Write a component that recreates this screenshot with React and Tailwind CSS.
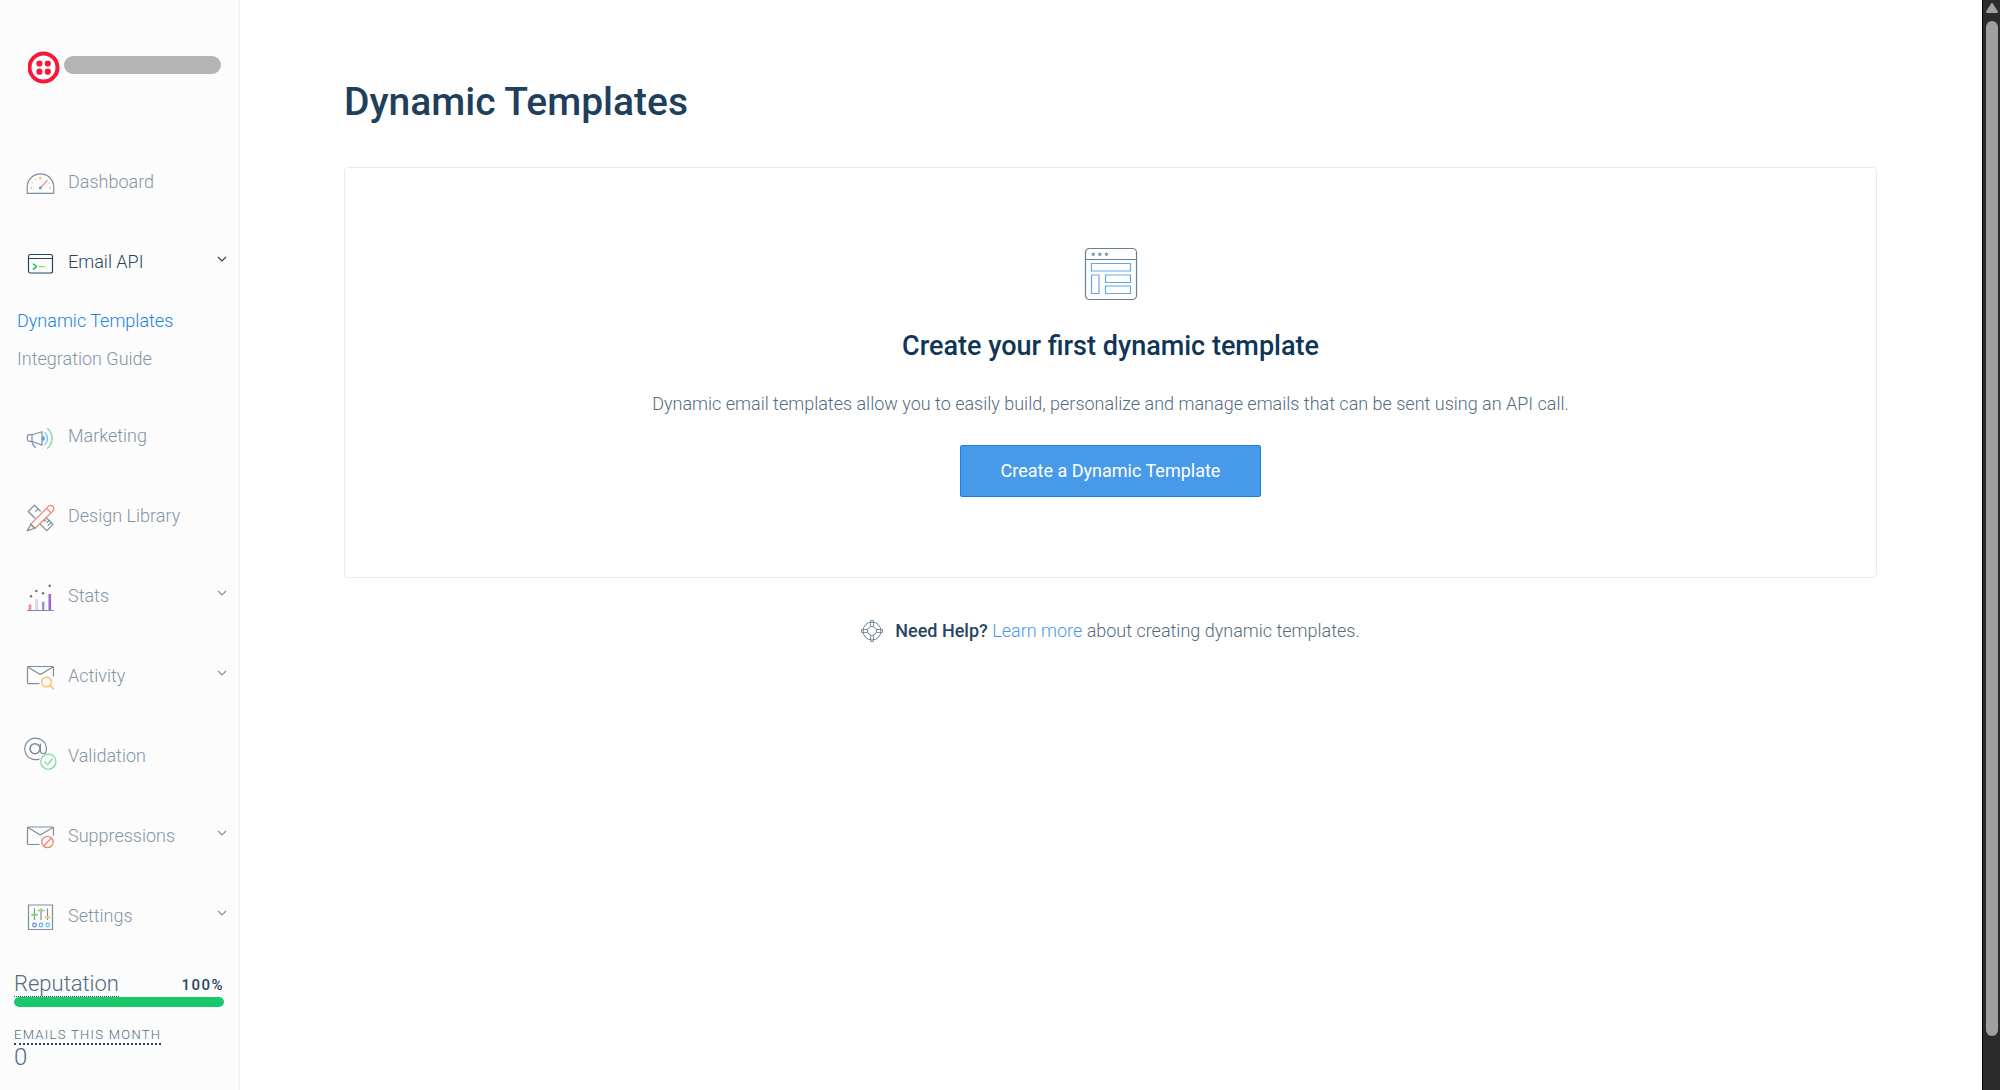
import { useState } from "react";
import clsx from "clsx";

const SLATE = "#7c8da0";

function Icon({ children, stroke = SLATE }) {
  return (
    <svg
      width="32"
      height="40"
      viewBox="0 0 32 40"
      fill="none"
      stroke={stroke}
      strokeWidth="1.2"
      strokeLinecap="round"
      strokeLinejoin="round"
      className="shrink-0 overflow-visible"
      aria-hidden="true"
    >
      {children}
    </svg>
  );
}

const icons = {
  dashboard: (
    <Icon>
      <path d="M3.2 31.3V25.2a13.2 13.2 0 0 1 26.6 0v6.100z" strokeLinejoin="miter" />
      <g fill="#f9bf62" stroke="none">
        <circle cx="16.4" cy="16.2" r="1.2" />
        <circle cx="11.6" cy="17.6" r=".7" />
        <circle cx="8.2" cy="21" r=".7" />
        <circle cx="7.2" cy="26" r=".9" />
        <circle cx="25" cy="21.2" r=".7" />
        <circle cx="26" cy="26" r=".9" />
      </g>
      <path d="M17 25.2L23.2 18.6" stroke="#f2836f" />
      <circle cx="16.3" cy="25.9" r="1.4" fill="#479ae9" stroke="none" />
    </Icon>
  ),
  email: (
    <Icon stroke="#294661">
      <rect x="4.5" y="12.5" width="24" height="18.5" rx="2" />
      <path d="M4.5 16.5h24" />
      <path d="M9.5 22l3 2.6-3 2.6" stroke="#18c96b" strokeWidth="1.6" />
      <path d="M15.6 24.6h4.8" stroke="#8fd96b" strokeWidth="1.4" />
    </Icon>
  ),
  marketing: (
    <Icon>
      <path d="M8 18.7L18 15.7v13.6L8 25.3H5.2a2 2 0 0 1-1.8-2v-2.6a2 2 0 0 1 1.8-2zM8 18.7v6.6" />
      <path d="M8.2 26.4c.4 2.4 1.4 4.2 3.2 5.2" stroke="#6f8fd8" />
      <path d="M19 20.6a2 2 0 0 1 0 3.6z" fill="#479ae9" stroke="#479ae9" />
      <path d="M20.8 16.6a8 8 0 0 1 0 12" stroke="#5cc3ec" />
      <path d="M23.6 12.4c6 5.6 6 14.2 0 19.8" stroke="#7fdca4" strokeWidth="1.4" />
    </Icon>
  ),
  design: (
    <Icon>
      <path d="M11 22.2L4.2 15.5 10.5 9.2l5.8 5.8M22.5 22l6.5 6.4-6.2 6.2-6.6-6.5" />
      <path d="M14 12.8l-2.4 2.4M25 24.5l-2 2M27 26.5l-2.8 2.8M21.5 24l-1 1" />
      <path
        d="M6.8 28.2L23 11.8l1.3-1.5a3.3 3.3 0 0 1 4.6 4.7l-1.3 1.3-16.6 15.9zM22.5 12.3l4.6 4.6"
        stroke="#f2836f"
      />
      <path d="M6.8 28.2L3.4 34.6l7.6-2.4M6.8 28.2l1.7 2 2.5 2" />
    </Icon>
  ),
  stats: (
    <Icon>
      <g stroke="none">
        <path d="M4.7 28.5h2.6V34H4.7z" fill="#f98a94" />
        <path d="M11.2 23h2.8v11h-2.8z" fill="#edcdf2" />
        <path d="M18 25.7h2.4V34H18z" fill="#8f8df0" />
        <path d="M24.5 18h2.6v16h-2.6z" fill="#a265c8" />
        <g fill="#5f7489">
          <circle cx="7" cy="20.3" r="1.2" />
          <circle cx="12.3" cy="15" r="1.2" />
          <circle cx="19" cy="17.3" r="1.2" />
          <circle cx="25.7" cy="9.7" r="1.2" />
        </g>
      </g>
      <path d="M3.5 34.5h26" />
    </Icon>
  ),
  activity: (
    <Icon>
      <path d="M15 27.6H4.5a1 1 0 0 1-1-1V11.5a1 1 0 0 1 1-1h24a1 1 0 0 1 1 1v8.5M3.8 11l12.5 7.4L29 11" />
      <g stroke="#fbc264" strokeWidth="1.5">
        <circle cx="22.5" cy="26" r="4.8" />
        <path d="M26.2 29.6l3.3 3.3" />
      </g>
    </Icon>
  ),
  validation: (
    <Icon>
      <path d="M15 23.1A10.8 10.8 0 1 1 22.4 13c0 3-1 4.7-3 4.7-2.2 0-3-1.5-3-3.7V8.2" />
      <circle cx="11" cy="12.7" r="5" strokeWidth="1.6" />
      <g stroke="#7fdca4" strokeWidth="1.3">
        <circle cx="24.3" cy="25.7" r="7.6" />
        <path d="M20.8 25.8l2.8 2.8 4.6-5.6" />
      </g>
    </Icon>
  ),
  suppressions: (
    <Icon>
      <path d="M15 28.5H4.5a1 1 0 0 1-1-1V12a1 1 0 0 1 1-1h24a1 1 0 0 1 1 1v7M3.8 11.6l12.5 7.4L29 11.6" />
      <g stroke="#f2836f" strokeWidth="1.3">
        <circle cx="23.5" cy="26" r="5.7" />
        <path d="M19.6 30l7.8-8" />
      </g>
    </Icon>
  ),
  settings: (
    <Icon>
      <rect x="4.5" y="9" width="24" height="24.5" />
      <path d="M10.5 12.5v11.5M17 12.5v11.5M23.5 12.5v11.5" strokeLinecap="butt" />
      <g strokeWidth="2" strokeLinecap="butt">
        <path d="M7.2 18.8h6.6" stroke="#7fd07f" />
        <path d="M13.7 14.5h6.6" stroke="#a5d578" />
        <path d="M20.5 21.3h6.3" stroke="#ecd07a" />
      </g>
      <circle cx="10.5" cy="29" r="1.8" stroke="#5f86d0" />
      <circle cx="17" cy="29" r="1.8" stroke="#62aeea" />
      <circle cx="23.7" cy="29" r="1.8" stroke="#5cc3ec" />
    </Icon>
  ),
};

const navItems = [
  { id: "dashboard", label: "Dashboard" },
  {
    id: "email",
    label: "Email API",
    children: ["Dynamic Templates", "Integration Guide"],
  },
  { id: "marketing", label: "Marketing" },
  { id: "design", label: "Design Library" },
  { id: "stats", label: "Stats", expandable: true },
  { id: "activity", label: "Activity", expandable: true },
  { id: "validation", label: "Validation" },
  { id: "suppressions", label: "Suppressions", expandable: true },
  { id: "settings", label: "Settings", expandable: true },
];

function Chevron() {
  return (
    <svg
      width="10"
      height="10"
      viewBox="0 0 10 10"
      fill="none"
      stroke="currentColor"
      strokeWidth="1.2"
      className="ml-auto mb-1.5"
      aria-hidden="true"
    >
      <path d="M1 3l4 4 4-4" />
    </svg>
  );
}

function NavItem({ item, open, onToggle }) {
  const rowClass = clsx(
    "flex h-20 w-full items-center gap-3 pl-6 pr-[11px] text-left",
    open ? "text-[#294661]" : "text-[#8594a5]"
  );

  if (!item.children && !item.expandable) {
    return (
      <li>
        <a href={`#${item.id}`} className={rowClass}>
          {icons[item.id]}
          {item.label}
        </a>
      </li>
    );
  }

  return (
    <li>
      <button type="button" aria-expanded={open} onClick={onToggle} className={rowClass}>
        {icons[item.id]}
        {item.label}
        <Chevron />
      </button>
      {open && item.children && (
        <ul className="pb-[18px]">
          {item.children.map((child, idx) => (
            <li key={child}>
              <a
                href={`#${item.id}-${idx}`}
                className={clsx(
                  "flex h-[38px] items-center pl-[17px]",
                  idx === 0 ? "text-[#1a82e2]" : "text-[#8594a5]"
                )}
              >
                {child}
              </a>
            </li>
          ))}
        </ul>
      )}
    </li>
  );
}

function Sidebar() {
  const [openId, setOpenId] = useState("email");

  return (
    <aside className="flex w-60 shrink-0 flex-col border-r-2 border-[#f4f4f5] bg-[#fcfcfc]">
      <header className="flex h-[142px] items-start gap-1 pl-7 pt-[51px]">
        <svg width="32" height="33" viewBox="0 0 32 33" className="shrink-0" aria-hidden="true">
          <circle cx="15.5" cy="16.5" r="14" fill="#fff" stroke="#f5193a" strokeWidth="4" />
          <g fill="#f5193a">
            <circle cx="11.4" cy="12.5" r="3.1" />
            <circle cx="19.8" cy="12.5" r="3.1" />
            <circle cx="11.4" cy="20.7" r="3.1" />
            <circle cx="19.8" cy="20.7" r="3.1" />
          </g>
        </svg>
        <div className="mt-[5px] h-[18px] w-[157px] rounded-full bg-[#b4b4b4]" />
      </header>

      <nav aria-label="Main">
        <ul>
          {navItems.map((item) => (
            <NavItem
              key={item.id}
              item={item}
              open={openId === item.id}
              onToggle={() => setOpenId(openId === item.id ? null : item.id)}
            />
          ))}
        </ul>
      </nav>

      <section className="px-3.5 pt-4 text-[#546b81]">
        <div className="flex items-center justify-between">
          <span className="border-b border-dotted border-[#294661] text-[22px] leading-6">
            Reputation
          </span>
          <span className="text-[15px] font-medium tracking-widest text-[#294661]">100%</span>
        </div>
        <div className="h-2.5 rounded-full bg-[#18c96b]" />
        <div className="mt-5 flex">
          <span className="border-b-2 border-dotted border-[#294661] text-[13px] leading-4 tracking-widest">
            EMAILS THIS MONTH
          </span>
        </div>
        <div className="text-[24px] leading-6">0</div>
      </section>
    </aside>
  );
}

function TemplateIcon() {
  return (
    <svg width="54" height="54" viewBox="0 0 54 54" fill="none" stroke="#6b7f94" aria-hidden="true">
      <rect x="1.5" y="1.5" width="51" height="51" rx="4" strokeWidth="1.2" />
      <path d="M1.5 12.5h51" />
      <g fill="#a9b4c0">
        <circle cx="9.3" cy="7.3" r="1.2" />
        <circle cx="15.8" cy="7.3" r="1.2" />
        <circle cx="22.5" cy="7.3" r="1.2" />
      </g>
      <g stroke="#62a8ee" strokeWidth="1.2">
        <path d="M7.5 16.5h39v7.5h-39zM7.5 28h7.5v18.5H7.5zM21.5 28h25v7.5h-25zM21.5 39h25v7.5h-25z" />
      </g>
    </svg>
  );
}

function HelpIcon() {
  return (
    <svg width="22" height="22" viewBox="0 0 22 22" fill="none" stroke="#6b7f94" aria-hidden="true">
      <circle cx="11" cy="11" r="9" />
      <circle cx="11" cy="11" r="4.5" />
      <path
        d="M9.5.5v6M12.5.5v6M9.5 15.5v6M12.5 15.5v6M.5 9.5h6M.5 12.5h6M15.5 9.5h6M15.5 12.5h6M9.5.5h3M9.5 21.5h3M.5 9.5v3M21.5 9.5v3"
        strokeWidth=".8"
      />
    </svg>
  );
}

function ScrollTrack() {
  return (
    <div
      className="flex w-[18px] shrink-0 flex-col items-center border-l border-black bg-[#2b2b2b] pt-[3px]"
      aria-hidden="true"
    >
      <svg width="12" height="10" viewBox="0 0 12 10">
        <path d="M6 1L11 9H1z" fill="#9f9f9f" stroke="#9f9f9f" strokeWidth="2" strokeLinejoin="round" />
      </svg>
      <div className="mt-2 mb-[54px] w-3 grow rounded-full bg-[#9f9f9f]" />
    </div>
  );
}

export default function App() {
  return (
    <div className="flex min-h-screen bg-white font-['Roboto',sans-serif] text-[18px] leading-6 font-light">
      <Sidebar />

      <main className="grow pl-[104px] pr-[105px] pt-[78px]">
        <h1 className="text-[39px] leading-[48px] font-medium text-[#1f3f5b]">Dynamic Templates</h1>

        <section className="mt-[41px] flex flex-col items-center rounded-sm border border-[#e9ecef] px-6 pt-[79px] pb-20">
          <TemplateIcon />
          <h2 className="mt-[29px] text-[27px] leading-8 font-medium text-[#0f3557]">
            Create your first dynamic template
          </h2>
          <p className="mt-[30px] text-[#546b81]">
            Dynamic email templates allow you to easily build, personalize and manage emails that can
            be sent using an API call.
          </p>
          <button
            type="button"
            className="mt-[29px] h-[52px] w-[301px] cursor-pointer rounded-xs border border-[#1a82e2] bg-[#479ae9] font-normal text-white"
          >
            Create a Dynamic Template
          </button>
        </section>

        <div className="mt-[41px] flex items-center justify-center gap-3 text-[#546b81]">
          <HelpIcon />
          <p>
            <strong className="font-medium text-[#294661]">Need Help?</strong>{" "}
            <a href="#learn-more" className="text-[#479ae9]">
              Learn more
            </a>{" "}
            about creating dynamic templates.
          </p>
        </div>
      </main>

      <ScrollTrack />
    </div>
  );
}
